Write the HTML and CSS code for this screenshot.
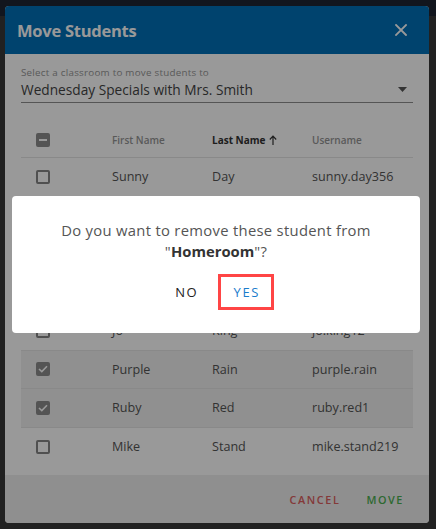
FILE: index.html
```html
<!DOCTYPE html>
<html lang="en">
<head>
<meta charset="utf-8">
<title>Move Students</title>
<link rel="stylesheet" href="styles.css">
</head>
<body>
<div class="page">
  <div class="dialog">
    <div class="dialog-header">
      <h1 class="dialog-title">Move Students</h1>
      <svg class="close-icon" width="12" height="12" viewBox="0 0 12 12"><path d="M1 1L11 11M11 1L1 11" stroke="#fff" stroke-width="1.8" stroke-linecap="square"/></svg>
    </div>
    <div class="dialog-body">
      <div class="field">
        <div class="field-label">Select a classroom to move students to</div>
        <div class="field-value">
          <span>Wednesday Specials with Mrs. Smith</span>
          <svg class="caret" width="9" height="5" viewBox="0 0 9 5"><path d="M0 0H9L4.5 5Z" fill="#555"/></svg>
        </div>
      </div>
      <div class="table">
        <div class="row head">
          <div class="cell check"><span class="box indeterminate"><span class="dash"></span></span></div>
          <div class="cell">First Name</div>
          <div class="cell sorted">Last Name <svg class="sort" width="8" height="10" viewBox="0 0 8 10"><path d="M4 10V1.5M0.8 4.5L4 1.2L7.2 4.5" fill="none" stroke="#333" stroke-width="1.2"/></svg></div>
          <div class="cell">Username</div>
        </div>
        <div class="row">
          <div class="cell check"><span class="box"></span></div>
          <div class="cell">Sunny</div><div class="cell">Day</div><div class="cell">sunny.day356</div>
        </div>
        <div class="row">
          <div class="cell check"><span class="box"></span></div>
          <div class="cell"></div><div class="cell"></div><div class="cell"></div>
        </div>
        <div class="row">
          <div class="cell check"><span class="box"></span></div>
          <div class="cell"></div><div class="cell"></div><div class="cell"></div>
        </div>
        <div class="row">
          <div class="cell check"><span class="box"></span></div>
          <div class="cell"></div><div class="cell"></div><div class="cell"></div>
        </div>
        <div class="row">
          <div class="cell check"><span class="box"></span></div>
          <div class="cell">Jo</div><div class="cell">King</div><div class="cell">jo.king12</div>
        </div>
        <div class="row selected">
          <div class="cell check"><span class="box checked"><svg width="10" height="8" viewBox="0 0 10 8"><path d="M1 4L3.8 6.6L9 1.2" fill="none" stroke="#fff" stroke-width="1.6"/></svg></span></div>
          <div class="cell">Purple</div><div class="cell">Rain</div><div class="cell">purple.rain</div>
        </div>
        <div class="row selected">
          <div class="cell check"><span class="box checked"><svg width="10" height="8" viewBox="0 0 10 8"><path d="M1 4L3.8 6.6L9 1.2" fill="none" stroke="#fff" stroke-width="1.6"/></svg></span></div>
          <div class="cell">Ruby</div><div class="cell">Red</div><div class="cell">ruby.red1</div>
        </div>
        <div class="row last">
          <div class="cell check"><span class="box"></span></div>
          <div class="cell">Mike</div><div class="cell">Stand</div><div class="cell">mike.stand219</div>
        </div>
      </div>
    </div>
    <div class="dialog-footer">
      <button class="btn cancel">CANCEL</button>
      <button class="btn move">MOVE</button>
    </div>
  </div>
</div>
<div class="overlay"></div>
<div class="confirm">
  <p class="confirm-text">Do you want to remove these student from "<b>Homeroom</b>"?</p>
  <div class="confirm-actions">
    <button class="cbtn no">NO</button>
    <button class="cbtn yes">YES</button>
  </div>
</div>
</body>
</html>
```
FILE: styles.css
```css
* { box-sizing: border-box; }
html, body { margin: 0; padding: 0; }
body {
  font-family: "Open Sans", "Liberation Sans", sans-serif;
  background: #373737;
  width: 436px;
  height: 529px;
  overflow: hidden;
}
.page {
  height: 529px;
  background: linear-gradient(#1f2632 0, #1f2632 16px, #373737 16px);
  padding: 6px 7px 0 5px;
}
.dialog {
  width: 424px;
  height: 517px;
  background: #fff;
  border-radius: 4px;
  overflow: hidden;
  display: flex;
  flex-direction: column;
}
.dialog-header {
  height: 48px;
  flex: none;
  background: #0070b8;
  display: flex;
  align-items: center;
  justify-content: space-between;
  padding: 0 22px 0 12px;
}
.dialog-title {
  margin: 0;
  color: #fff;
  font-size: 16.5px;
  font-weight: 700;
  letter-spacing: -0.25px;
}
.dialog-body {
  flex: 1;
  padding: 12px 16px 0;
}
.field-label {
  font-size: 9.8px;
  line-height: 14px;
  letter-spacing: 0.25px;
  color: #969696;
}
.field-value {
  display: flex;
  align-items: center;
  justify-content: space-between;
  font-size: 13.7px;
  line-height: 19px;
  color: #444;
  padding: 0 6px 3px 0;
  border-bottom: 1px solid #8e8e8e;
}
.table { margin-top: 19px; }
.row {
  display: grid;
  grid-template-columns: 91px 100px 100px 1fr;
  align-items: center;
  height: 38.5px;
  border-bottom: 1px solid #e4e4e4;
  font-size: 12.6px;
  color: #555;
}
.row.head {
  height: 36px;
  font-size: 10px;
  font-weight: 600;
  color: #959595;
}
.row.selected { background: #f0f0f0; }
.row.last { border-bottom: none; }
.cell { display: flex; align-items: center; white-space: nowrap; }
.cell.check { padding-left: 15px; }
.cell.sorted { color: #333; font-weight: 700; gap: 3px; }
.box {
  width: 14px;
  height: 14px;
  border: 2px solid #858585;
  border-radius: 2px;
  display: flex;
  align-items: center;
  justify-content: center;
}
.box.checked, .box.indeterminate {
  background: #8c8c8c;
  border-color: #8c8c8c;
}
.dash { width: 8px; height: 2px; background: #fff; }
.dialog-footer {
  height: 48px;
  flex: none;
  background: #eeeeee;
  display: flex;
  align-items: center;
  justify-content: flex-end;
  gap: 12px;
  padding-right: 19px;
}
.btn {
  font-family: inherit;
  background: none;
  border: none;
  padding: 0 6px 0 8px;
  height: 36px;
  font-size: 10.8px;
  font-weight: 600;
  letter-spacing: 1.6px;
}
.btn.cancel { color: #dc5f5f; }
.btn.move { color: #4caf50; }
.overlay {
  position: fixed;
  inset: 0;
  background: rgba(0, 0, 0, 0.4);
}
.confirm {
  position: fixed;
  left: 12px;
  top: 196px;
  width: 408px;
  height: 137px;
  background: #fff;
  border-radius: 4px;
  padding: 24px 0 0;
  display: flex;
  flex-direction: column;
  align-items: center;
}
.confirm-text {
  margin: 0;
  width: 340px;
  text-align: center;
  font-size: 14.8px;
  line-height: 21px;
  letter-spacing: 0.3px;
  color: #555;
}
.confirm-text b { color: #333; font-weight: 700; letter-spacing: 0; }
.confirm-actions {
  margin-top: 12px;
  display: flex;
  gap: 4px;
}
.cbtn {
  font-family: inherit;
  background: none;
  border: none;
  width: 56px;
  height: 36px;
  font-size: 13px;
  font-weight: 500;
  letter-spacing: 1.6px;
  padding: 0 0 0 1.6px;
}
.cbtn.no { color: #222; }
.cbtn.yes {
  color: #1a7ccc;
  border: 3px solid #ff4545;
}
```
